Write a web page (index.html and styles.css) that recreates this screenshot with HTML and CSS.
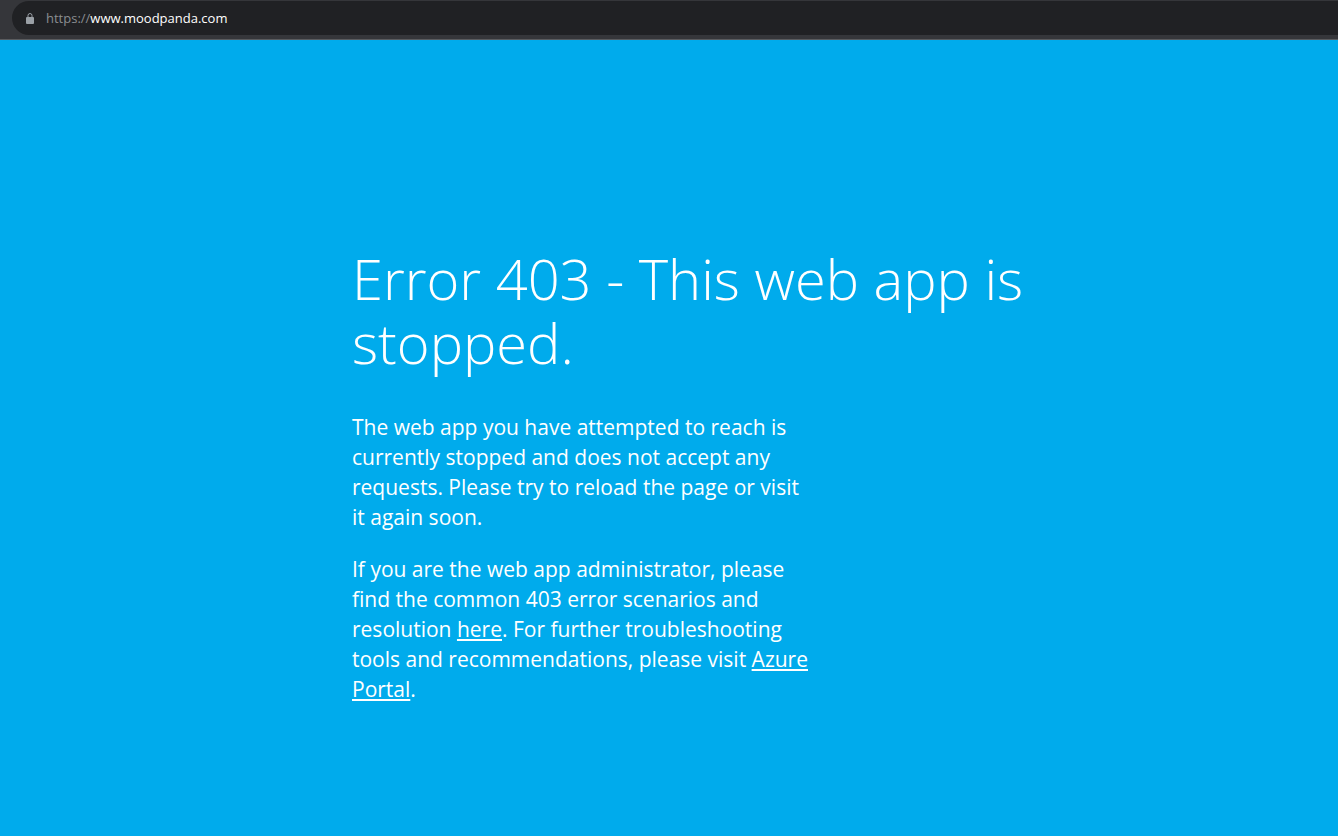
FILE: index.html
```html
<!DOCTYPE html>
<html lang="en">
<head>
    <meta charset="UTF-8">
    <meta name="viewport" content="width=device-width, initial-scale=1.0">
    <title>Web App - Unavailable</title>
    <link rel="stylesheet" href="styles.css">
</head>
<body>
    <header class="toolbar">
        <div class="address-bar">
            <svg class="lock" viewBox="0 0 8 11" aria-hidden="true">
                <path d="M2 4.5V2.5a2 2 0 0 1 4 0v2" fill="none" stroke="#9aa0a6"/>
                <rect y="4" width="8" height="7" rx="1" fill="#9aa0a6"/>
            </svg>
            <span class="url"><span class="scheme">https://</span>www.moodpanda.com</span>
        </div>
    </header>
    <main>
        <h1>Error 403 - This web app is stopped.</h1>
        <div class="message">
            <p>The web app you have attempted to reach is currently stopped and does not accept any requests. Please try to reload the page or visit it again soon.</p>
            <p>If you are the web app administrator, please find the common 403 error scenarios and resolution <a href="#">here</a>. For further troubleshooting tools and recommendations, please visit <a href="#">Azure Portal</a>.</p>
        </div>
    </main>
</body>
</html>
```

FILE: styles.css
```css
body {
    font-family: "Segoe UI", "Open Sans", sans-serif;
    margin: 0;
    background-color: #00abec;
    color: white;
}

/* Browser bar */
.toolbar {
    background-color: #35363a;
    border-bottom: 1px solid #5b5c5f;
    padding: 1px 0 4px 12px;
}

.address-bar {
    display: flex;
    align-items: center;
    gap: 12px;
    height: 34px;
    padding-left: 14px;
    background-color: #202124;
    border-radius: 17px 0 0 17px;
}

.lock {
    width: 8px;
    height: 11px;
}

.url {
    font-size: 13px;
    line-height: 18px;
}

.scheme {
    color: #8a8d91;
}

/* Error message */
main {
    box-sizing: border-box;
    max-width: 720px;
    margin: 0 auto;
    padding: 206px 0 40px 43px;
}

h1 {
    margin: 0;
    font-size: 56px;
    font-weight: 300;
    line-height: 64px;
}

.message {
    max-width: 460px;
    margin-top: 38px;
    font-size: 21px;
    line-height: 30px;
}

p {
    margin: 0 0 22px;
}

a {
    color: white;
    text-decoration-thickness: 2px;
    text-decoration-skip-ink: none;
    text-underline-offset: 2px;
}
```
